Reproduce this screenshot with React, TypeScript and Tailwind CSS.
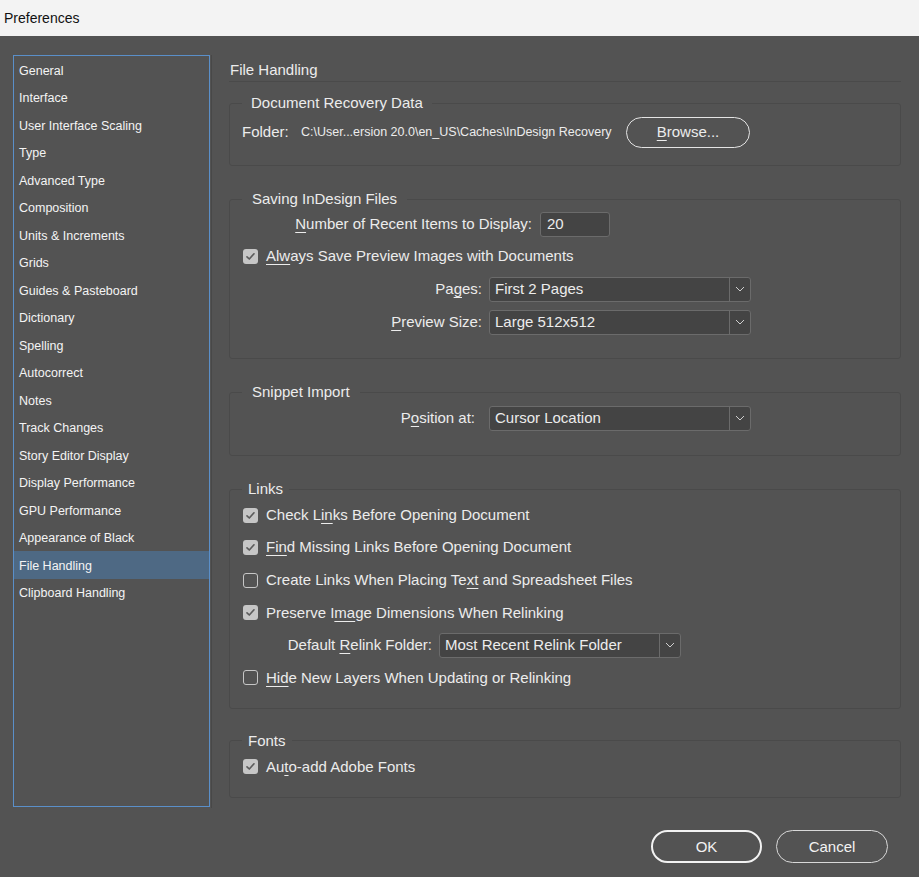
import type { ReactNode } from 'react';

const navItems = [
  'General',
  'Interface',
  'User Interface Scaling',
  'Type',
  'Advanced Type',
  'Composition',
  'Units & Increments',
  'Grids',
  'Guides & Pasteboard',
  'Dictionary',
  'Spelling',
  'Autocorrect',
  'Notes',
  'Track Changes',
  'Story Editor Display',
  'Display Performance',
  'GPU Performance',
  'Appearance of Black',
  'File Handling',
  'Clipboard Handling'
];

const font = { fontFamily: '"Liberation Sans", Arial, sans-serif' };

const Checkbox = ({ checked }: { checked: boolean }) => (
  <span
    className={
      checked
        ? 'flex h-[15px] w-[15px] shrink-0 items-center justify-center rounded-[3px] bg-[#c6c6c6]'
        : 'flex h-[15px] w-[15px] shrink-0 items-center justify-center rounded-[3px] border border-[#c6c6c6]'
    }
  >
    {checked && (
      <svg width="11" height="11" viewBox="0 0 11 11" fill="none">
        <path d="M2 5.8 L4.3 8 L9 2.8" stroke="#5c5c5c" strokeWidth="1.7" strokeLinecap="round" strokeLinejoin="round" />
      </svg>
    )}
  </span>
);

const CheckRow = ({ checked, children }: { checked: boolean; children: ReactNode }) => (
  <div className="flex h-[24px] items-center pl-[1px]">
    <Checkbox checked={checked} />
    <span className="ml-[8px] text-[15px] text-[#ececec]">{children}</span>
  </div>
);

const Select = ({ value, width }: { value: string; width: string }) => (
  <div className={`flex h-[25px] rounded-[3px] border border-[#6b6b6b] bg-[#444444] ${width}`}>
    <div className="flex flex-1 items-center pl-[5px] text-[15px] text-[#ececec]">{value}</div>
    <div className="flex w-[21px] items-center justify-center border-l border-[#6b6b6b]">
      <svg width="10" height="6" viewBox="0 0 10 6" fill="none">
        <path d="M1 1 L5 5 L9 1" stroke="#cfcfcf" strokeWidth="1" />
      </svg>
    </div>
  </div>
);

const Group = ({
  title,
  legendPad,
  className,
  children
}: {
  title: string;
  legendPad: string;
  className: string;
  children: ReactNode;
}) => (
  <fieldset className={`rounded-[3px] border border-[#4a4a4a] pl-[12px] ${className}`}>
    <legend className={`h-[20px] text-[15px] leading-[20px] text-[#ececec] ${legendPad}`}>{title}</legend>
    {children}
  </fieldset>
);

const U = ({ children }: { children: ReactNode }) => (
  <span className="underline decoration-1 underline-offset-[3px]">{children}</span>
);

export default function App() {
  return (
    <div className="h-[877px] w-[919px] overflow-hidden bg-[#535353]" style={font}>
      {/* Window title */}
      <div className="flex h-[36px] items-center bg-[#f3f3f3] pl-[4px] text-[14px] text-[#111111]">Preferences</div>

      <div className="flex">
        {/* Category list */}
        <div className="ml-[13px] mt-[19px] h-[752px] w-[197px] border border-[#5a8fc9]">
          {navItems.map((item) => (
            <div
              key={item}
              className={
                item === 'File Handling'
                  ? 'flex h-[27.5px] items-center bg-[#4e6984] pl-[5px] pt-[3px] text-[12.5px] text-[#f4f4f4]'
                  : 'flex h-[27.5px] items-center pl-[5px] pt-[3px] text-[12.5px] text-[#f4f4f4]'
              }
            >
              {item}
            </div>
          ))}
        </div>

        {/* Settings panel */}
        <div className="ml-[1px] mt-[19px] flex h-[753px] flex-1 flex-col border-l border-[#484848] pl-[17px] pr-[18px]">
          <div className="h-[27px] border-b border-[#4a4a4a] pl-[1px] pt-[5px] text-[15px] leading-[20px] text-[#ececec]">
            File Handling
          </div>

          <Group title="Document Recovery Data" legendPad="px-[9px]" className="mt-[11px] pb-[17px]">
            <div className="mt-[4px] flex h-[31px] items-center">
              <span className="w-[59px] text-[15px] text-[#ececec]">Folder:</span>
              <span className="w-[325px] text-[12.5px] text-[#ececec]">
                C:\User...ersion 20.0\en_US\Caches\InDesign Recovery
              </span>
              <button className="flex h-[31px] w-[124px] items-center justify-center rounded-full border-[1.5px] border-[#e4e4e4] text-[15px] text-[#ececec]">
                <U>B</U>rowse...
              </button>
            </div>
          </Group>

          <Group title="Saving InDesign Files" legendPad="px-[10px]" className="mt-[23px] pb-[24px]">
            <div className="mt-[3px] flex h-[24px] items-center">
              <span className="w-[290px] text-right text-[15px] text-[#ececec]">
                <U>N</U>umber of Recent Items to Display:
              </span>
              <div className="ml-[8px] flex h-[25px] w-[70px] items-center rounded-[3px] border border-[#6b6b6b] bg-[#444444] pl-[6px] text-[15px] text-[#ececec]">
                20
              </div>
            </div>
            <div className="mt-[8px]">
              <CheckRow checked>
                <U>Alw</U>ays Save Preview Images with Documents
              </CheckRow>
            </div>
            <div className="mt-[9px] flex h-[24px] items-center">
              <span className="w-[240px] text-right text-[15px] text-[#ececec]">
                Pa<U>g</U>es:
              </span>
              <div className="ml-[7px]">
                <Select value="First 2 Pages" width="w-[262px]" />
              </div>
            </div>
            <div className="mt-[9px] flex h-[24px] items-center">
              <span className="w-[240px] text-right text-[15px] text-[#ececec]">
                <U>P</U>review Size:
              </span>
              <div className="ml-[7px]">
                <Select value="Large 512x512" width="w-[262px]" />
              </div>
            </div>
          </Group>

          <Group title="Snippet Import" legendPad="px-[10px]" className="mt-[23px] pb-[25px]">
            <div className="mt-[4px] flex h-[24px] items-center">
              <span className="w-[233px] text-right text-[15px] text-[#ececec]">
                P<U>o</U>sition at:
              </span>
              <div className="ml-[14px]">
                <Select value="Cursor Location" width="w-[262px]" />
              </div>
            </div>
          </Group>

          <Group title="Links" legendPad="px-[6px]" className="mt-[23px] pb-[18px]">
            <div className="mt-[4px] flex flex-col gap-[8.6px]">
              <CheckRow checked>
                Check L<U>in</U>ks Before Opening Document
              </CheckRow>
              <CheckRow checked>
                <U>Fin</U>d Missing Links Before Opening Document
              </CheckRow>
              <CheckRow checked={false}>
                Create Links When Placing Te<U>xt</U> and Spreadsheet Files
              </CheckRow>
              <CheckRow checked>
                Preserve I<U>ma</U>ge Dimensions When Relinking
              </CheckRow>
              <div className="flex h-[24px] items-center">
                <span className="w-[190px] text-right text-[15px] text-[#ececec]">
                  Default <U>R</U>elink Folder:
                </span>
                <div className="ml-[7px]">
                  <Select value="Most Recent Relink Folder" width="w-[242px]" />
                </div>
              </div>
              <CheckRow checked={false}>
                <U>Hid</U>e New Layers When Updating or Relinking
              </CheckRow>
            </div>
          </Group>

          <Group title="Fonts" legendPad="px-[6px]" className="mt-[22px] pb-[18px]">
            <div className="mt-[4px]">
              <CheckRow checked>
                Au<U>t</U>o-add Adobe Fonts
              </CheckRow>
            </div>
          </Group>
        </div>
      </div>

      {/* Dialog buttons */}
      <div className="mt-[22px] flex justify-end gap-[14px] pr-[31px]">
        <button className="flex h-[33px] w-[111px] items-center justify-center rounded-full border-2 border-[#f2f2f2] pt-[1px] text-[15px] text-[#f2f2f2]">
          OK
        </button>
        <button className="flex h-[33px] w-[112px] items-center justify-center rounded-full border border-[#d8d8d8] pt-[1px] text-[15px] text-[#f2f2f2]">
          Cancel
        </button>
      </div>
    </div>
  );
}
